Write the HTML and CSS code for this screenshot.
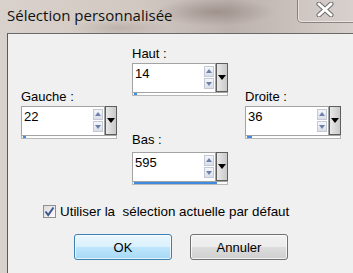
FILE: index.html
```html
<!DOCTYPE html>
<html lang="fr">
<head>
    <meta charset="UTF-8">
    <title>Sélection personnalisée</title>
    <link rel="stylesheet" href="styles.css">
</head>
<body>
    <div class="window">
        <div class="titlebar">
            <span class="title">Sélection personnalisée</span>
            <div class="close">
                <svg width="18" height="15" viewBox="0 0 18 15">
                    <path d="M3 2 L15 13 M15 2 L3 13" stroke="#6d6d6d" stroke-width="5" stroke-linecap="round"/>
                    <path d="M3 2 L15 13 M15 2 L3 13" stroke="#ffffff" stroke-width="3" stroke-linecap="round"/>
                </svg>
            </div>
        </div>

        <div class="client">
            <div class="fields">
                <div class="col col-side">
                    <div class="field">
                        <div class="label">Gauche :</div>
                        <div class="spin">
                            <div class="box">
                                <span class="value">22</span>
                                <div class="arrows"><span class="up"></span><span class="down"></span></div>
                            </div>
                            <div class="drop"></div>
                        </div>
                        <div class="bar"><span style="width: 3%"></span></div>
                    </div>
                </div>

                <div class="col col-mid">
                    <div class="field">
                        <div class="label">Haut :</div>
                        <div class="spin">
                            <div class="box">
                                <span class="value">14</span>
                                <div class="arrows"><span class="up"></span><span class="down"></span></div>
                            </div>
                            <div class="drop"></div>
                        </div>
                        <div class="bar"><span style="width: 3%"></span></div>
                    </div>
                    <div class="field field-low">
                        <div class="label">Bas :</div>
                        <div class="spin">
                            <div class="box">
                                <span class="value">595</span>
                                <div class="arrows"><span class="up"></span><span class="down"></span></div>
                            </div>
                            <div class="drop"></div>
                        </div>
                        <div class="bar"><span style="width: 89%"></span></div>
                    </div>
                </div>

                <div class="col col-side">
                    <div class="field">
                        <div class="label">Droite :</div>
                        <div class="spin">
                            <div class="box">
                                <span class="value">36</span>
                                <div class="arrows"><span class="up"></span><span class="down"></span></div>
                            </div>
                            <div class="drop"></div>
                        </div>
                        <div class="bar"><span style="width: 5%"></span></div>
                    </div>
                </div>
            </div>

            <label class="check">
                <span class="checkbox">
                    <svg width="11" height="11" viewBox="0 0 11 11">
                        <path d="M1.5 5.5 L4.2 9 L9.5 1.5" fill="none" stroke="#3d5590" stroke-width="2"/>
                    </svg>
                </span>
                Utiliser la&nbsp; sélection actuelle par défaut
            </label>

            <div class="buttons">
                <button class="btn btn-default">OK</button>
                <button class="btn">Annuler</button>
            </div>
        </div>
    </div>
</body>
</html>
```

FILE: styles.css
```css
* {
    margin: 0;
    padding: 0;
    box-sizing: border-box;
}

body {
    margin: 0;
    width: 353px;
    height: 273px;
    overflow: hidden;
    font-family: 'Liberation Sans', Arial, sans-serif;
    font-size: 13px;
    color: #000;
}

.window {
    width: 353px;
    height: 273px;
    display: flex;
    flex-direction: column;
    background:
        radial-gradient(ellipse 60px 14px at 215px 12px, rgba(120, 105, 100, 0.45), transparent),
        radial-gradient(ellipse 50px 10px at 120px 28px, rgba(150, 135, 130, 0.35), transparent),
        linear-gradient(90deg, #d9d1cb 0%, #d2c8c2 40%, #bdb2ad 65%, #cbc2bd 85%, #d6cfcb 100%);
}

.titlebar {
    height: 33px;
    display: flex;
    justify-content: space-between;
    align-items: flex-start;
}

.title {
    font-family: 'Open Sans', 'Noto Sans', sans-serif;
    font-size: 15px;
    color: #111;
    padding: 5px 0 0 7px;
}

.close {
    width: 60px;
    height: 23px;
    margin-right: -4px;
    border: 1px solid rgba(90, 80, 80, 0.6);
    border-top: none;
    border-radius: 0 0 0 5px;
    box-shadow: inset 1px 0 0 rgba(255, 255, 255, 0.5), inset 0 -1px 0 rgba(255, 255, 255, 0.5);
    background: rgba(220, 210, 210, 0.25);
    display: flex;
    justify-content: center;
    align-items: center;
    padding: 0 4px 3px 0;
}

.client {
    flex: 1;
    margin-left: 7px;
    background: #f0f0f0;
    border-left: 1px solid #5a5a5a;
    border-top: 1px solid #6a6a6a;
}

.fields {
    display: flex;
    padding: 12px 0 0 13px;
}

.col {
    width: 96px;
}

.col-mid {
    margin: 0 17px 0 15px;
}

.col-side {
    padding-top: 43px;
}

.label {
    height: 15px;
    line-height: 15px;
    margin-bottom: 2px;
}

.field-low {
    margin-top: 36px;
}

.field-low .label {
    margin-bottom: 5px;
}

.spin {
    display: flex;
    height: 29px;
}

.box {
    flex: 1;
    display: flex;
    justify-content: space-between;
    background: #fff;
    border: 1px solid #a3a3a3;
    border-bottom: none;
    padding: 1px 1px 0 2px;
}

.value {
    line-height: 18px;
    font-size: 13px;
}

.arrows {
    display: flex;
    flex-direction: column;
    gap: 1px;
    width: 10px;
    padding-top: 1px;
}

.up,
.down {
    height: 11px;
    border: 1px solid #c3cad6;
    background: linear-gradient(#f4f6fa, #d9dfea);
    position: relative;
}

.up::after,
.down::after {
    content: '';
    position: absolute;
    left: 1px;
    border-left: 3px solid transparent;
    border-right: 3px solid transparent;
}

.up::after {
    top: 2px;
    border-bottom: 4px solid #6d80a8;
}

.down::after {
    top: 3px;
    border-top: 4px solid #6d80a8;
}

.drop {
    width: 12px;
    border: 1px solid #5e5e5e;
    background: linear-gradient(90deg, #e8e8e8, #c9c9c9);
    position: relative;
}

.drop::after {
    content: '';
    position: absolute;
    top: 11px;
    left: 1px;
    border-left: 4px solid transparent;
    border-right: 4px solid transparent;
    border-top: 5px solid #000;
}

.bar {
    height: 4px;
    border: 1px solid #b8b8b8;
    border-top-color: #a3a3a3;
    background: #fdfdfd;
    padding-left: 1px;
}

.bar span {
    display: block;
    height: 2px;
    background: #3f8be0;
}

.check {
    display: flex;
    align-items: center;
    gap: 4px;
    margin: 19px 0 0 35px;
    font-size: 13.4px;
    height: 15px;
}

.checkbox {
    width: 13px;
    height: 13px;
    border: 1px solid #8e8f8f;
    background: linear-gradient(135deg, #dcdcdc, #fbfbfb);
    display: flex;
    justify-content: center;
    align-items: center;
}

.buttons {
    display: flex;
    gap: 18px;
    margin: 15px 0 0 66px;
}

.btn {
    width: 98px;
    height: 26px;
    border: 1px solid #707070;
    border-radius: 3px;
    background: linear-gradient(#f2f2f2 0%, #ebebeb 49%, #dddddd 50%, #cfcfcf 100%);
    box-shadow: inset 0 0 0 1px rgba(255, 255, 255, 0.7);
    font-family: 'Liberation Sans', Arial, sans-serif;
    font-size: 13px;
    color: #000;
}

.btn-default {
    border-color: #3c7fb1;
    background: linear-gradient(#eaf6fd 0%, #d9f0fc 49%, #bee6fd 50%, #a7d9f5 100%);
}
```
